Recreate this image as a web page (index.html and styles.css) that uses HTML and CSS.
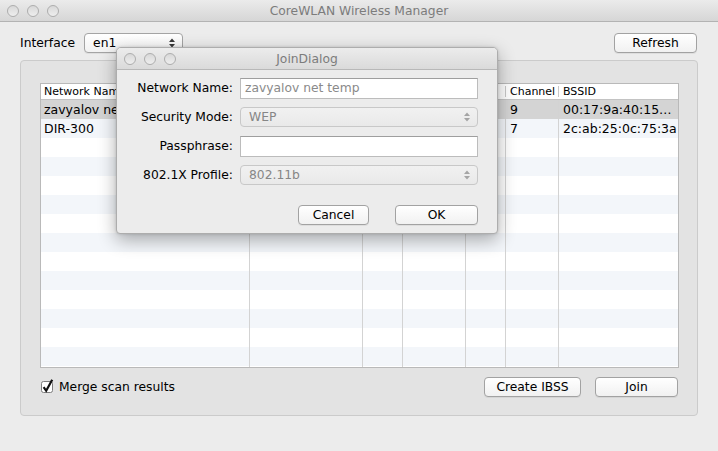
FILE: index.html
```html
<!DOCTYPE html>
<html>
<head>
<meta charset="utf-8">
<link rel="stylesheet" href="styles.css">
</head>
<body>
<div class="window">
  <div class="titlebar">
    <div class="lights"><span class="light"></span><span class="light"></span><span class="light"></span></div>
    <div class="title">CoreWLAN Wireless Manager</div>
    <div></div>
  </div>
  <div class="toolbar">
    <span class="label">Interface</span>
    <div class="popup main-popup"><span>en1</span>
      <svg class="arrows" width="6" height="10" viewBox="0 0 6 10"><path d="M0 4 L3 0.5 L6 4 Z M0 6 L3 9.5 L6 6 Z" fill="#3a3a3a"/></svg>
    </div>
    <div class="spacer"></div>
    <button class="btn refresh">Refresh</button>
  </div>
  <div class="group">
    <div class="table">
      <div class="thead row">
        <div class="cell first">Network Name</div>
        <div class="cell"></div>
        <div class="cell"></div>
        <div class="cell"></div>
        <div class="cell"></div>
        <div class="cell">Channel</div>
        <div class="cell">BSSID</div>
      </div>
      <div class="tbody">
        <div class="row selected"><div class="cell first">zavyalov net temp</div><div class="cell"></div><div class="cell"></div><div class="cell"></div><div class="cell"></div><div class="cell">9</div><div class="cell">00:17:9a:40:15…</div></div>
        <div class="row"><div class="cell first">DIR-300</div><div class="cell"></div><div class="cell"></div><div class="cell"></div><div class="cell"></div><div class="cell">7</div><div class="cell">2c:ab:25:0c:75:3a</div></div>
        <div class="row"><div class="cell"></div><div class="cell"></div><div class="cell"></div><div class="cell"></div><div class="cell"></div><div class="cell"></div><div class="cell"></div></div>
        <div class="row"><div class="cell"></div><div class="cell"></div><div class="cell"></div><div class="cell"></div><div class="cell"></div><div class="cell"></div><div class="cell"></div></div>
        <div class="row"><div class="cell"></div><div class="cell"></div><div class="cell"></div><div class="cell"></div><div class="cell"></div><div class="cell"></div><div class="cell"></div></div>
        <div class="row"><div class="cell"></div><div class="cell"></div><div class="cell"></div><div class="cell"></div><div class="cell"></div><div class="cell"></div><div class="cell"></div></div>
        <div class="row"><div class="cell"></div><div class="cell"></div><div class="cell"></div><div class="cell"></div><div class="cell"></div><div class="cell"></div><div class="cell"></div></div>
        <div class="row"><div class="cell"></div><div class="cell"></div><div class="cell"></div><div class="cell"></div><div class="cell"></div><div class="cell"></div><div class="cell"></div></div>
        <div class="row"><div class="cell"></div><div class="cell"></div><div class="cell"></div><div class="cell"></div><div class="cell"></div><div class="cell"></div><div class="cell"></div></div>
        <div class="row"><div class="cell"></div><div class="cell"></div><div class="cell"></div><div class="cell"></div><div class="cell"></div><div class="cell"></div><div class="cell"></div></div>
        <div class="row"><div class="cell"></div><div class="cell"></div><div class="cell"></div><div class="cell"></div><div class="cell"></div><div class="cell"></div><div class="cell"></div></div>
        <div class="row"><div class="cell"></div><div class="cell"></div><div class="cell"></div><div class="cell"></div><div class="cell"></div><div class="cell"></div><div class="cell"></div></div>
        <div class="row"><div class="cell"></div><div class="cell"></div><div class="cell"></div><div class="cell"></div><div class="cell"></div><div class="cell"></div><div class="cell"></div></div>
        <div class="row"><div class="cell"></div><div class="cell"></div><div class="cell"></div><div class="cell"></div><div class="cell"></div><div class="cell"></div><div class="cell"></div></div>
        <div class="row"><div class="cell"></div><div class="cell"></div><div class="cell"></div><div class="cell"></div><div class="cell"></div><div class="cell"></div><div class="cell"></div></div>
      </div>
    </div>
    <div class="bottom">
      <label class="check">
        <svg width="14" height="15" viewBox="0 0 14 15"><rect x="0.5" y="2.5" width="11" height="11" rx="2" fill="#fff" stroke="#7d7d7d"/><path d="M2.6 8.2 L5.2 11.8 L11.2 0.8" fill="none" stroke="#111" stroke-width="2.2"/></svg>
        <span>Merge scan results</span>
      </label>
      <div class="spacer"></div>
      <button class="btn create">Create IBSS</button>
      <button class="btn join">Join</button>
    </div>
  </div>

  <div class="dialog">
    <div class="dtitlebar">
      <div class="lights"><span class="light"></span><span class="light"></span><span class="light"></span></div>
      <div class="title">JoinDialog</div>
      <div></div>
    </div>
    <div class="form">
      <div class="flabel">Network Name:</div>
      <div class="field text">zavyalov net temp</div>
      <div class="flabel">Security Mode:</div>
      <div class="field popup disabled"><span>WEP</span>
        <svg class="arrows" width="6" height="10" viewBox="0 0 6 10"><path d="M0 4 L3 0.5 L6 4 Z M0 6 L3 9.5 L6 6 Z" fill="#a5a5a5"/></svg>
      </div>
      <div class="flabel">Passphrase:</div>
      <div class="field text"></div>
      <div class="flabel">802.1X Profile:</div>
      <div class="field popup disabled"><span>802.11b</span>
        <svg class="arrows" width="6" height="10" viewBox="0 0 6 10"><path d="M0 4 L3 0.5 L6 4 Z M0 6 L3 9.5 L6 6 Z" fill="#a5a5a5"/></svg>
      </div>
    </div>
    <div class="dbuttons">
      <button class="btn cancel">Cancel</button>
      <button class="btn ok">OK</button>
    </div>
  </div>
</div>
</body>
</html>
```
FILE: styles.css
```css
* { box-sizing: border-box; }
body {
  margin: 0;
  background: #ececec;
  font-family: "DejaVu Sans", "Liberation Sans", sans-serif;
  font-size: 12.3px;
  color: #000;
}
.window {
  width: 718px;
  height: 451px;
  position: relative;
  overflow: hidden;
  background: #ececec;
}
.titlebar {
  height: 22px;
  border-bottom: 1px solid #b3b3b3;
  background: linear-gradient(#ebebeb, #d6d6d6);
  display: grid;
  grid-template-columns: 1fr auto 1fr;
  align-items: center;
}
.lights {
  display: flex;
  gap: 8px;
  padding-left: 7px;
}
.light {
  width: 12px;
  height: 12px;
  border-radius: 50%;
  border: 1px solid #adadad;
  background: linear-gradient(#d8d8d8, #eeeeee);
}
.title {
  color: #7c7c7c;
  font-size: 12.3px;
}
.toolbar {
  display: flex;
  align-items: center;
  height: 21px;
  margin-top: 10px;
  padding: 0 21px 0 20px;
}
.spacer { flex: 1; }
.popup {
  display: flex;
  align-items: center;
  justify-content: space-between;
  height: 20px;
  border-radius: 4px;
  padding: 0 7px 0 8px;
}
.main-popup {
  width: 99px;
  margin-left: 9px;
  border: 1px solid #a4a4a4;
  background: linear-gradient(#ffffff, #f2f2f2);
  box-shadow: 0 1px 0 rgba(0,0,0,0.06);
}
.btn {
  height: 20px;
  border: 1px solid #a2a2a2;
  border-radius: 4px;
  background: linear-gradient(#ffffff, #f1f1f1);
  font: inherit;
  color: #000;
  padding: 0;
  text-align: center;
  box-shadow: 0 1px 0 rgba(0,0,0,0.06);
}
.refresh { width: 83px; margin-top: 1px; }
.group {
  margin: 7px 20px 0 20px;
  height: 356px;
  border: 1px solid #cbcbcb;
  border-radius: 4px;
  background: #e3e3e3;
  padding: 22px 18px 18px 19px;
  display: flex;
  flex-direction: column;
}
.table {
  height: 285px;
  border: 1px solid #b9b9b9;
  background: #fff;
  display: flex;
  flex-direction: column;
  overflow: hidden;
}
.row {
  display: grid;
  grid-template-columns: 209px 113px 40px 63px 40px 53px 1fr;
  height: 19px;
}
.tbody .row:nth-child(even) { background: #f3f6fa; }
.tbody .row.selected { background: #d4d4d4; }
.cell {
  border-right: 1px solid #d3d3d3;
  padding-left: 4px;
  white-space: nowrap;
  overflow: hidden;
  line-height: 19px;
  font-size: 12.5px;
}
.cell.first { padding-left: 3px; }
.cell:last-child { border-right: none; }
.thead {
  height: 16px;
  border-bottom: 1px solid #c3c3c3;
  background: #fff;
  flex: none;
}
.thead .cell {
  font-size: 11px;
  line-height: 15px;
  border-right: none;
  position: relative;
}
.thead .cell::after {
  content: "";
  position: absolute;
  right: 0;
  top: 2px;
  bottom: 2px;
  width: 1px;
  background: #c8c8c8;
}
.thead .cell:last-child::after { display: none; }
.tbody { flex: 1; overflow: hidden; }
.bottom {
  display: flex;
  align-items: center;
  height: 20px;
  margin-top: 9px;
}
.check {
  display: flex;
  align-items: center;
  gap: 4px;
  margin-left: 1px;
}
.check svg { margin-top: -2px; }
.create { width: 97px; }
.join { width: 83px; margin-left: 14px; margin-right: 1px; }

.dialog {
  position: absolute;
  left: 116px;
  top: 47px;
  width: 382px;
  height: 187px;
  border: 1px solid #adadad;
  border-radius: 5px 5px 4px 4px;
  background: #ececec;
  box-shadow: 0 6px 18px rgba(0,0,0,0.32), 0 0 3px rgba(0,0,0,0.15);
  display: flex;
  flex-direction: column;
}
.dtitlebar {
  height: 22px;
  border-bottom: 1px solid #b8b8b8;
  background: linear-gradient(#ececec, #dadada);
  border-radius: 4px 4px 0 0;
  display: grid;
  grid-template-columns: 1fr auto 1fr;
  align-items: center;
}
.form {
  display: grid;
  grid-template-columns: 116px 238px;
  grid-template-rows: 22px 20px 22px 20px;
  column-gap: 7px;
  row-gap: 8px;
  align-items: center;
  padding-top: 7px;
}
.flabel { text-align: right; }
.field.text {
  height: 21px;
  border: 1px solid #bcbcbc;
  border-top-color: #9e9e9e;
  background: #fff;
  color: #8a8a8a;
  padding-left: 4px;
  line-height: 19px;
}
.popup.disabled {
  border: 1px solid #c8c8c8;
  background: linear-gradient(#f1f1f1, #e9e9e9);
  color: #868686;
}
.dbuttons {
  display: flex;
  justify-content: flex-end;
  gap: 26px;
  padding-right: 19px;
  margin-top: 20px;
}
.cancel { width: 71px; }
.ok { width: 83px; }
```
